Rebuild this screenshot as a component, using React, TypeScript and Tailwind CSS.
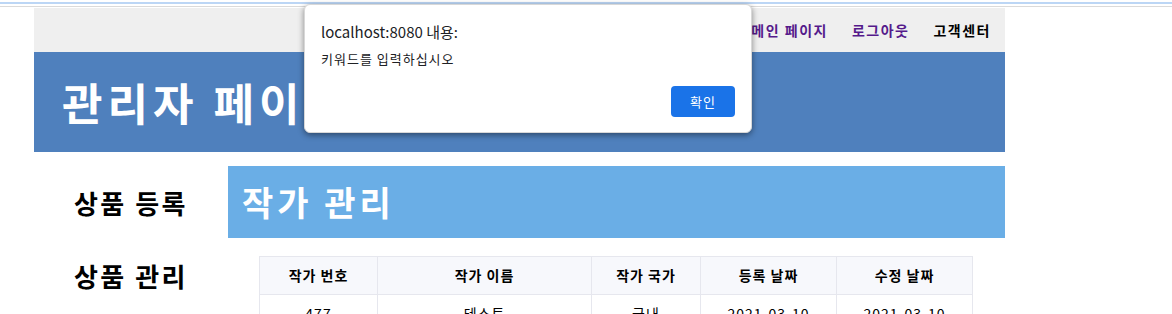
import * as React from 'react';

const FONT = { fontFamily: '"Noto Sans CJK KR", "Noto Sans", sans-serif' };

const columns = [
    { label: '작가 번호', width: 'w-[118px]' },
    { label: '작가 이름', width: 'w-[214px]' },
    { label: '작가 국가', width: 'w-[109px]' },
    { label: '등록 날짜', width: 'w-[136px]' },
    { label: '수정 날짜', width: 'w-[136px]' },
];

const rows = [['477', '테스트', '국내', '2021-03-10', '2021-03-10']];

function AlertDialog() {
    return (
        <div className="absolute left-[304px] top-[4px] w-[448px] h-[129px] bg-white rounded-[6px] border border-[#d8d8d8] shadow-[0_2px_6px_rgba(0,0,0,0.45)] px-[16px]">
            <div className="pt-[17px] text-[15px] leading-[20px] text-[#202124]">localhost:8080 내용:</div>
            <div className="mt-[8px] text-[13px] leading-[18px] tracking-[1px] text-[#202124]">키워드를 입력하십시오</div>
            <div className="flex justify-end mt-[18px]">
                <button
                    type="button"
                    className="w-[64px] h-[31px] rounded-[4px] bg-[#1a73e8] text-white text-[13px] tracking-[1px]"
                >
                    확인
                </button>
            </div>
        </div>
    );
}

export default function App() {
    return (
        <div className="relative w-[1172px] h-[314px] overflow-hidden bg-white" style={FONT}>
            <div className="h-[2px]" />
            <div className="h-[2px] bg-[#bcd6f5]" />
            <div className="h-[2px]" />
            <div className="h-[1px] bg-[#dadada]" />
            <div className="h-[1px]" />

            <div className="ml-[34px] w-[971px]">
                <nav className="h-[44px] bg-[#efefef] flex items-center justify-end gap-[24px] pr-[14px] text-[14px] font-bold tracking-[1.5px]">
                    <a className="text-[#551a8b]">메인 페이지</a>
                    <a className="text-[#551a8b]">로그아웃</a>
                    <a className="text-black">고객센터</a>
                </nav>
                <header className="h-[100px] bg-[#4f80bd] flex items-center pl-[28px]">
                    <h1 className="text-white text-[44px] font-bold leading-none tracking-[5px]">관리자 페이지</h1>
                </header>

                <div className="flex mt-[14px]">
                    <aside className="w-[194px] flex flex-col items-center">
                        <div className="h-[72px] flex items-center text-[26px] font-bold tracking-[2.5px] text-black">상품 등록</div>
                        <div className="h-[74px] flex items-center text-[26px] font-bold tracking-[2.5px] text-black">상품 관리</div>
                    </aside>
                    <main className="flex-1">
                        <div className="h-[72px] bg-[#6aaee6] flex items-center pl-[14px]">
                            <h2 className="text-white text-[34px] font-bold leading-none tracking-[4px]">작가 관리</h2>
                        </div>
                        <table className="mt-[18px] ml-[31px] border-collapse text-[14px] text-black">
                            <thead>
                                <tr className="bg-[#f7f8fc]">
                                    {columns.map((col) => (
                                        <th
                                            key={col.label}
                                            className={`${col.width} h-[38px] border border-[#e6e7ee] font-semibold tracking-[1px] text-center`}
                                        >
                                            {col.label}
                                        </th>
                                    ))}
                                </tr>
                            </thead>
                            <tbody>
                                {rows.map((row, i) => (
                                    <tr key={i}>
                                        {row.map((cell, j) => (
                                            <td key={j} className="h-[38px] border border-[#e6e7ee] text-center tracking-[1px]">
                                                {cell}
                                            </td>
                                        ))}
                                    </tr>
                                ))}
                            </tbody>
                        </table>
                    </main>
                </div>
            </div>

            <AlertDialog />
        </div>
    );
}
